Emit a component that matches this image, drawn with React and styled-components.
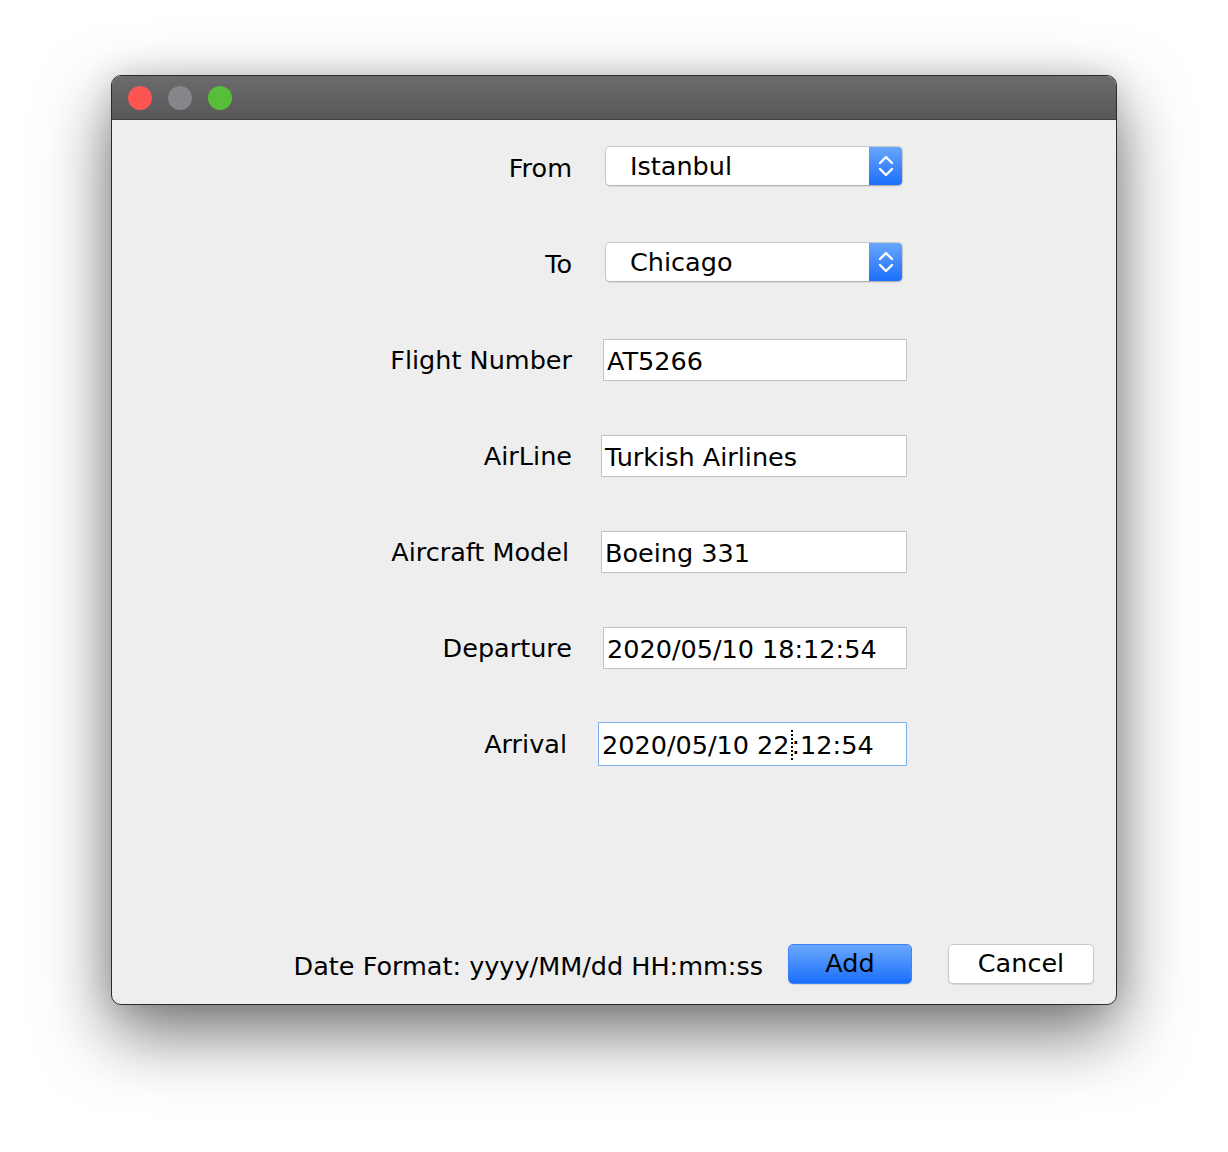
import React from 'react';
import styled, { createGlobalStyle } from 'styled-components';

const GlobalStyle = createGlobalStyle`
  html, body {
    margin: 0;
    padding: 0;
    background: #ffffff;
  }
  body {
    font-family: 'DejaVu Sans', 'Liberation Sans', sans-serif;
  }
`;

const Page = styled.div`
  width: 1228px;
  height: 1152px;
  padding: 75px 0 0 111px;
  box-sizing: border-box;
`;

const Window = styled.div`
  width: 1006px;
  height: 930px;
  box-sizing: border-box;
  border: 1px solid #2b2b2b;
  border-radius: 10px;
  overflow: hidden;
  display: flex;
  flex-direction: column;
  background: #eeeeee;
  box-shadow: 0 28px 70px rgba(0, 0, 0, 0.55), 0 0 30px rgba(0, 0, 0, 0.12);
`;

const TitleBar = styled.div`
  height: 43px;
  flex-shrink: 0;
  display: flex;
  align-items: center;
  gap: 16px;
  padding-left: 16px;
  background: linear-gradient(#6c6c6d, #58585a);
  border-bottom: 1px solid #3e3e3e;
`;

const Light = styled.span`
  width: 24px;
  height: 24px;
  border-radius: 50%;
  background: ${(p) => p.$color};
`;

const Body = styled.div`
  flex: 1;
  display: flex;
  flex-direction: column;
  color: #000;
  font-size: 25.5px;
`;

const Form = styled.div`
  display: grid;
  grid-template-columns: 460px 335px;
  grid-auto-rows: 96px;
  column-gap: 31px;
  margin-top: -2px;
`;

const Label = styled.div`
  display: flex;
  align-items: center;
  justify-content: flex-end;
  padding-right: ${(p) => p.$shift || 0}px;
  padding-top: ${(p) => p.$down || 0}px;
`;

const Cell = styled.div`
  display: flex;
  align-items: center;
  padding-top: ${(p) => p.$down || 0}px;
`;

const Combo = styled.div`
  margin-left: 2px;
  width: 298px;
  height: 40px;
  box-sizing: border-box;
  display: flex;
  border: 1px solid #c9c9c9;
  border-bottom-color: #b4b4b4;
  border-radius: 5px;
  background: #ffffff;
  box-shadow: 0 1px 1px rgba(0, 0, 0, 0.08);
  overflow: hidden;
`;

const ComboText = styled.div`
  flex: 1;
  display: flex;
  align-items: center;
  padding-left: 24px;
`;

const ComboArrow = styled.div`
  width: 33px;
  display: flex;
  align-items: center;
  justify-content: center;
  background: linear-gradient(#69a6fb, #1b6ffb);
`;

const Field = styled.div`
  margin-left: ${(p) => p.$inset}px;
  width: ${(p) => 304 - p.$inset}px;
  height: ${(p) => (p.$focused ? 44 : 42)}px;
  box-sizing: border-box;
  display: flex;
  align-items: center;
  padding-left: 3px;
  padding-top: 1px;
  background: #ffffff;
  border: 1px solid ${(p) => (p.$focused ? '#7eaee9' : '#c4c4c4')};
  white-space: pre;
`;

const Caret = styled.span`
  display: inline-block;
  width: 0;
  height: 30px;
  border-left: 2px dotted #000;
  margin: 0 -1px 0 1px;
`;

const Footer = styled.div`
  margin-top: auto;
  display: flex;
  align-items: center;
  justify-content: flex-end;
  padding: 0 22px 20px 0;
`;

const Hint = styled.div`
  margin-right: 25px;
  padding-top: 3px;
`;

const Button = styled.button`
  height: 40px;
  width: ${(p) => p.$width}px;
  box-sizing: border-box;
  font: inherit;
  color: #000;
  border-radius: 5px;
  padding: 0 0 2px;
  margin-left: ${(p) => p.$gap || 0}px;
  border: 1px solid ${(p) => (p.$primary ? '#3d82f7' : '#c8c8c8')};
  background: ${(p) => (p.$primary ? 'linear-gradient(#6aa8fc, #1a6efb)' : '#ffffff')};
  box-shadow: 0 1px 1px rgba(0, 0, 0, 0.1);
`;

const Chevrons = () => (
  <svg width="18" height="26" viewBox="0 0 18 26" fill="none" stroke="#fff" strokeWidth="2.4" strokeLinecap="round" strokeLinejoin="round">
    <path d="M3 10l6-6 6 6" />
    <path d="M3 16l6 6 6-6" />
  </svg>
);

const rows = [
  { label: 'From', combo: 'Istanbul', down: 3 },
  { label: 'To', combo: 'Chicago', down: 3 },
  { label: 'Flight Number', value: 'AT5266', inset: 0, down: 4 },
  { label: 'AirLine', value: 'Turkish Airlines', inset: -2, down: 4 },
  { label: 'Aircraft Model', value: 'Boeing 331', inset: -2, shift: 3, down: 4 },
  { label: 'Departure', value: '2020/05/10 18:12:54', inset: 0, down: 4 },
  { label: 'Arrival', value: ['2020/05/10 22', ':12:54'], inset: -5, shift: 5, down: 4, focused: true },
];

export default function App() {
  return (
    <Page>
      <GlobalStyle />
      <Window>
        <TitleBar>
          <Light $color="#fd5652" />
          <Light $color="#85858a" />
          <Light $color="#57be3a" />
        </TitleBar>
        <Body>
          <Form>
            {rows.map((r) => (
              <React.Fragment key={r.label}>
                <Label $shift={r.shift} $down={r.down}>{r.label}</Label>
                <Cell $down={r.combo ? 0 : r.down}>
                  {r.combo ? (
                    <Combo>
                      <ComboText>{r.combo}</ComboText>
                      <ComboArrow>
                        <Chevrons />
                      </ComboArrow>
                    </Combo>
                  ) : (
                    <Field $inset={r.inset} $focused={r.focused}>
                      {Array.isArray(r.value) ? (
                        <>
                          {r.value[0]}
                          <Caret />
                          {r.value[1]}
                        </>
                      ) : (
                        r.value
                      )}
                    </Field>
                  )}
                </Cell>
              </React.Fragment>
            ))}
          </Form>
          <Footer>
            <Hint>Date Format: yyyy/MM/dd HH:mm:ss</Hint>
            <Button $primary $width={124}>Add</Button>
            <Button $width={146} $gap={36}>Cancel</Button>
          </Footer>
        </Body>
      </Window>
    </Page>
  );
}
